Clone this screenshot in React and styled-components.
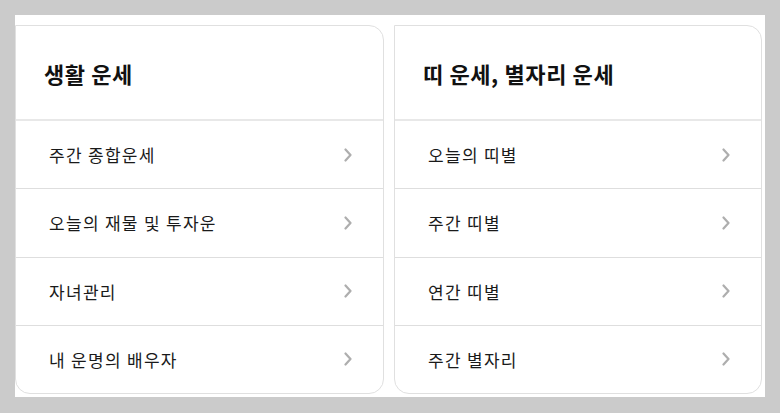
import styled, { createGlobalStyle } from "styled-components";

const GlobalStyle = createGlobalStyle`
  html, body {
    margin: 0;
    padding: 0;
    background: #cbcbcb;
  }
  body {
    font-family: "Noto Sans CJK KR", "Noto Sans", sans-serif;
    color: #111;
  }
`;

const sections = [
  {
    title: "생활 운세",
    items: ["주간 종합운세", "오늘의 재물 및 투자운", "자녀관리", "내 운명의 배우자"],
  },
  {
    title: "띠 운세, 별자리 운세",
    items: ["오늘의 띠별", "주간 띠별", "연간 띠별", "주간 별자리"],
  },
];

const Chevron = () => (
  <svg width="10" height="14" viewBox="0 0 10 14" fill="none">
    <path
      d="M2.5 1.5 L7.5 7 L2.5 12.5"
      stroke="#aeaeae"
      strokeWidth="2.2"
      strokeLinecap="round"
      strokeLinejoin="round"
    />
  </svg>
);

const App = () => {
  return (
    <>
      <GlobalStyle />
      <Page>
        <Wrapper>
          {sections.map((section) => (
            <Card key={section.title}>
              <CardHeader>
                <Title>{section.title}</Title>
              </CardHeader>
              {section.items.map((item) => (
                <Row key={item}>
                  <RowLabel>{item}</RowLabel>
                  <Chevron />
                </Row>
              ))}
            </Card>
          ))}
        </Wrapper>
      </Page>
    </>
  );
};

export default App;

const Page = styled.div`
  padding: 15px;
  box-sizing: border-box;
  width: 780px;
  height: 413px;
`;

const Wrapper = styled.div`
  width: 750px;
  height: 382px;
  box-sizing: border-box;
  background: #fff;
  padding: 10px 3px 3px 0;
  display: grid;
  grid-template-columns: 369px 368px;
  column-gap: 10px;
`;

const Card = styled.section`
  display: flex;
  flex-direction: column;
  border: 1px solid #e0e0e0;
  border-radius: 0 15px 15px 15px;
  background: #fff;
  overflow: hidden;
`;

const CardHeader = styled.div`
  height: 93px;
  display: flex;
  align-items: center;
  padding-left: 28px;
  border-bottom: 2px solid #e8e8e8;
`;

const Title = styled.h2`
  margin: 0;
  font-size: 22px;
  font-weight: 700;
  letter-spacing: 0.6px;
  color: #111;
`;

const Row = styled.div`
  flex: 1;
  display: flex;
  align-items: center;
  justify-content: space-between;
  padding: 0 30px 0 33px;
  border-top: 1px solid #dedede;
  &:nth-child(2) {
    border-top: none;
  }
`;

const RowLabel = styled.span`
  font-size: 17px;
  color: #1a1a1a;
  letter-spacing: 1.3px;
`;
